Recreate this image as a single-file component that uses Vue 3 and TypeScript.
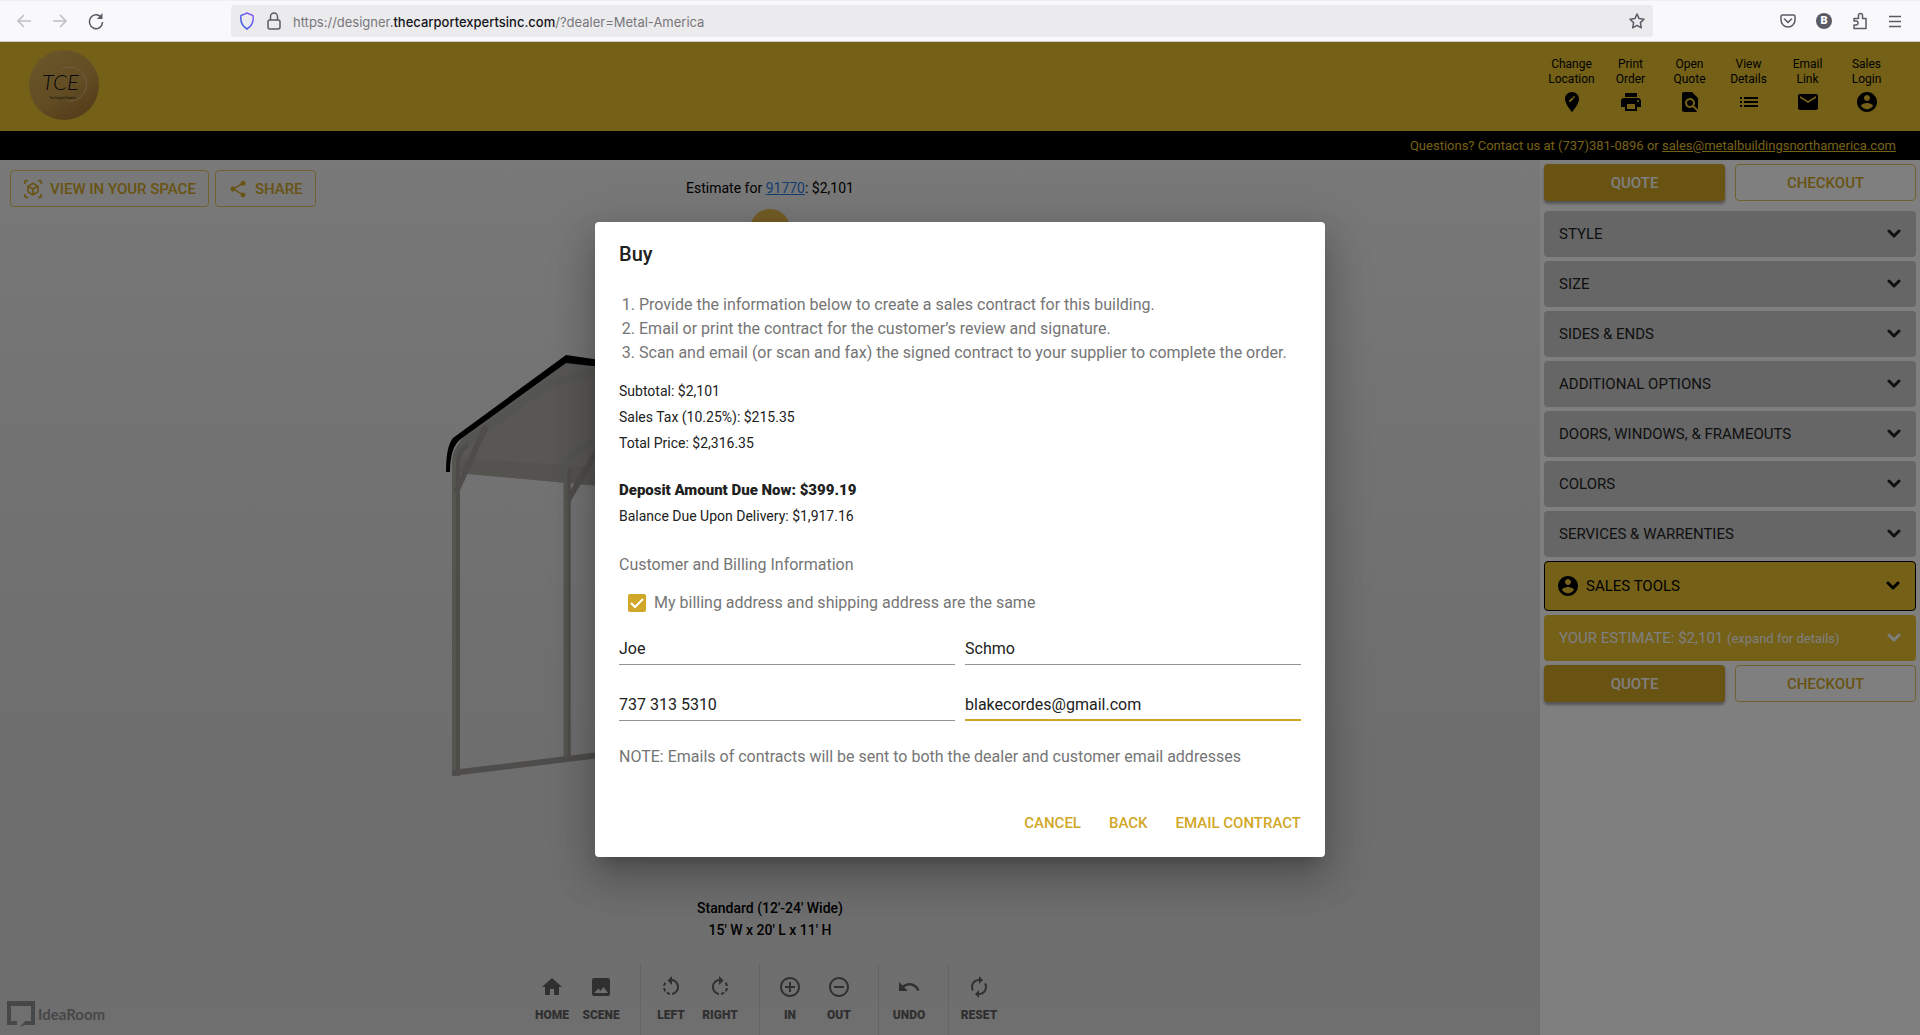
<script setup lang="ts">
import { ref } from 'vue'

interface IconItem {
  label: string
  path: string
}

const icons = {
  account:
    'M12 2C6.48 2 2 6.48 2 12s4.48 10 10 10 10-4.48 10-10S17.52 2 12 2zm0 3c1.66 0 3 1.34 3 3s-1.34 3-3 3-3-1.34-3-3 1.34-3 3-3zm0 14.2c-2.5 0-4.71-1.28-6-3.22.03-1.99 4-3.08 6-3.08 1.99 0 5.97 1.09 6 3.08-1.29 1.94-3.5 3.22-6 3.22z',
  ar: 'M3 4c0-.55.45-1 1-1h2V1H4C2.34 1 1 2.34 1 4v2h2V4zM3 20v-2H1v2c0 1.66 1.34 3 3 3h2v-2H4c-.55 0-1-.45-1-1zM20 1h-2v2h2c.55 0 1 .45 1 1v2h2V4c0-1.66-1.34-3-3-3zM21 20c0 .55-.45 1-1 1h-2v2h2c1.66 0 3-1.34 3-3v-2h-2v2zM19 14.87V9.13c0-.72-.38-1.38-1-1.73l-5-2.88c-.31-.18-.65-.27-1-.27s-.69.09-1 .27L6 7.39c-.62.36-1 1.02-1 1.74v5.74c0 .72.38 1.38 1 1.73l5 2.88c.31.18.65.27 1 .27s.69-.09 1-.27l5-2.88c.62-.35 1-1.01 1-1.73zm-8 2.3l-4-2.3v-4.63l4 2.33v4.6zm1-6.33L8.04 8.53 12 6.25l3.96 2.28L12 10.84zm5 4.03l-4 2.3v-4.6l4-2.33v4.63z',
  share:
    'M18 16.08c-.76 0-1.44.3-1.96.77L8.91 12.7c.05-.23.09-.46.09-.7s-.04-.47-.09-.7l7.05-4.11c.54.5 1.25.81 2.04.81 1.66 0 3-1.34 3-3s-1.34-3-3-3-3 1.34-3 3c0 .24.04.47.09.7L8.04 9.81C7.5 9.31 6.79 9 6 9c-1.66 0-3 1.34-3 3s1.34 3 3 3c.79 0 1.5-.31 2.04-.81l7.12 4.16c-.05.21-.08.43-.08.65 0 1.61 1.31 2.92 2.92 2.92s2.92-1.31 2.92-2.92-1.31-2.92-2.92-2.92z',
}

const menu: IconItem[] = [
  {
    label: 'Change Location',
    path: 'M12 2C8.14 2 5 5.14 5 9c0 5.25 7 13 7 13s7-7.75 7-13c0-3.86-3.14-7-7-7zm-1.56 10H9v-1.44l3.35-3.34 1.43 1.43L10.44 12zm4.45-4.45l-.7.7-1.44-1.44.7-.7c.15-.15.39-.15.54 0l.9.9c.15.15.15.39 0 .54z',
  },
  {
    label: 'Print Order',
    path: 'M19 8H5c-1.66 0-3 1.34-3 3v6h4v4h12v-4h4v-6c0-1.66-1.34-3-3-3zm-3 11H8v-5h8v5zm3-7c-.55 0-1-.45-1-1s.45-1 1-1 1 .45 1 1-.45 1-1 1zm-1-9H6v4h12V3z',
  },
  {
    label: 'Open Quote',
    path: 'M20 19.59V8l-6-6H6c-1.1 0-1.99.9-1.99 2L4 20c0 1.1.89 2 1.99 2H18c.45 0 .85-.15 1.19-.4l-4.43-4.43c-.8.52-1.74.83-2.76.83-2.76 0-5-2.24-5-5s2.24-5 5-5 5 2.24 5 5c0 1.02-.31 1.96-.83 2.75L20 19.59zM9 13c0 1.66 1.34 3 3 3s3-1.34 3-3-1.34-3-3-3-3 1.34-3 3z',
  },
  {
    label: 'View Details',
    path: 'M3 13h2v-2H3v2zm0 4h2v-2H3v2zm0-8h2V7H3v2zm4 4h14v-2H7v2zm0 4h14v-2H7v2zM7 7v2h14V7H7z',
  },
  {
    label: 'Email Link',
    path: 'M20 4H4c-1.1 0-1.99.9-1.99 2L2 18c0 1.1.9 2 2 2h16c1.1 0 2-.9 2-2V6c0-1.1-.9-2-2-2zm0 4l-8 5-8-5V6l8 5 8-5v2z',
  },
  { label: 'Sales Login', path: icons.account },
]

const toolGroups: IconItem[][] = [
  [
    { label: 'Home', path: 'M10 20v-6h4v6h5v-8h3L12 3 2 12h3v8z' },
    {
      label: 'Scene',
      path: 'M5 3h14a2 2 0 0 1 2 2v14a2 2 0 0 1-2 2H5a2 2 0 0 1-2-2V5a2 2 0 0 1 2-2zm0 15h14l-4.500-6-3 4-2-2.500z',
    },
  ],
  [
    {
      label: 'Left',
      path: 'M7.11 8.53L5.7 7.11C4.8 8.27 4.24 9.61 4.07 11h2.02c.14-.87.49-1.72 1.02-2.47zM6.09 13H4.07c.17 1.39.72 2.73 1.62 3.89l1.41-1.42c-.52-.75-.87-1.59-1.01-2.47zm1.01 5.32c1.16.9 2.51 1.44 3.9 1.61V17.9c-.87-.15-1.71-.49-2.46-1.03L7.1 18.32zM13 4.07V1L8.45 5.55 13 10V6.09c2.84.48 5 2.94 5 5.91s-2.16 5.43-5 5.91v2.02c3.95-.49 7-3.85 7-7.93s-3.05-7.44-7-7.93z',
    },
    {
      label: 'Right',
      path: 'M15.55 5.55L11 1v3.07C7.06 4.56 4 7.92 4 12s3.05 7.44 7 7.93v-2.02c-2.84-.48-5-2.94-5-5.91s2.16-5.43 5-5.91V10l4.55-4.45zM19.93 11c-.17-1.39-.72-2.73-1.62-3.89l-1.42 1.42c.54.75.88 1.6 1.02 2.47h2.02zM13 17.9v2.02c1.39-.17 2.74-.71 3.9-1.61l-1.44-1.44c-.75.54-1.59.89-2.46 1.03zm3.89-2.42l1.42 1.41c.9-1.16 1.45-2.5 1.62-3.89h-2.02c-.14.87-.48 1.72-1.02 2.48z',
    },
  ],
  [
    {
      label: 'In',
      path: 'M13 7h-2v4H7v2h4v4h2v-4h4v-2h-4V7zm-1-5C6.48 2 2 6.48 2 12s4.48 10 10 10 10-4.48 10-10S17.52 2 12 2zm0 18c-4.41 0-8-3.59-8-8s3.59-8 8-8 8 3.59 8 8-3.59 8-8 8z',
    },
    {
      label: 'Out',
      path: 'M7 11v2h10v-2H7zm5-9C6.48 2 2 6.48 2 12s4.48 10 10 10 10-4.48 10-10S17.52 2 12 2zm0 18c-4.41 0-8-3.59-8-8s3.59-8 8-8 8 3.59 8 8-3.59 8-8 8z',
    },
  ],
  [
    {
      label: 'Undo',
      path: 'M12.5 8c-2.65 0-5.05.99-6.9 2.6L2 7v9h9l-3.62-3.62c1.39-1.16 3.16-1.88 5.12-1.88 3.54 0 6.55 2.31 7.6 5.5l2.37-.78C21.08 11.03 17.15 8 12.5 8z',
    },
  ],
  [
    {
      label: 'Reset',
      path: 'M12 6v3l4-4-4-4v3c-4.42 0-8 3.58-8 8 0 1.57.46 3.03 1.24 4.26L6.7 14.8c-.45-.83-.7-1.79-.7-2.8 0-3.31 2.69-6 6-6zm6.76 1.74L17.3 9.2c.44.84.7 1.79.7 2.8 0 3.31-2.69 6-6 6v-3l-4 4 4 4v-3c4.42 0 8-3.58 8-8 0-1.57-.46-3.03-1.24-4.26z',
    },
  ],
]

const sections: string[] = [
  'Style',
  'Size',
  'Sides & Ends',
  'Additional Options',
  'Doors, Windows, & Frameouts',
  'Colors',
  'Services & Warrenties',
]

const sameAddress = ref(true)
const firstName = ref('Joe')
const lastName = ref('Schmo')
const phone = ref('737 313 5310')
const email = ref('blakecordes@gmail.com')
</script>

<template>
  <div class="page">
    <div class="browser">
      <div class="browser-nav">
        <button class="plain faded" type="button" aria-label="Back">
          <svg width="16" height="16" viewBox="0 0 16 16"><path d="M15 8H2M8 2L2 8l6 6" /></svg>
        </button>
        <button class="plain faded" type="button" aria-label="Forward">
          <svg width="16" height="16" viewBox="0 0 16 16"><path d="M1 8h13M8 2l6 6-6 6" /></svg>
        </button>
        <button class="plain" type="button" aria-label="Reload">
          <svg width="16" height="18" viewBox="0 0 16 18">
            <path d="M13.500 6A6.500 7 0 1 0 14.500 10" />
            <path d="M14.500 1v6H9z" fill="#5b5b66" stroke="none" />
          </svg>
        </button>
      </div>
      <div class="url">
        <svg width="16" height="18" viewBox="0 0 16 18">
          <defs>
            <linearGradient id="shield" x1="0" y1="1" x2="1" y2="0">
              <stop offset="0" stop-color="#2b5fe0" />
              <stop offset="1" stop-color="#8f5cf5" />
            </linearGradient>
          </defs>
          <path d="M8 1l6 2.500c.8 5-.5 10-6 13.500C2.500 13.500 1.200 8.500 2 3.500z" style="stroke: url(#shield)" />
        </svg>
        <svg width="14" height="18" viewBox="0 0 14 18">
          <rect x="1" y="8" width="12" height="9" rx="2" />
          <path d="M3.500 8V4.500a3.500 3.500 0 0 1 7 0V8" />
        </svg>
        <span class="address">https://designer.<b>thecarportexpertsinc.com</b>/?dealer=Metal-America</span>
        <svg width="16" height="16" viewBox="0 0 16 16">
          <path d="M8 1l2.100 4.600 4.900.6-3.600 3.400.9 5.200L8 12.300l-4.300 2.500.9-5.200L1 6.200l4.900-.6z" stroke-linejoin="round" />
        </svg>
      </div>
      <div class="browser-tools">
        <svg width="16" height="16" viewBox="0 0 16 16">
          <path d="M2.500 2h11A1.500 1.500 0 0 1 15 3.500V7A7 7 0 0 1 1 7V3.500A1.500 1.500 0 0 1 2.500 2zM4.500 6L8 9.500 11.500 6" stroke-linecap="round" />
        </svg>
        <span class="avatar">B</span>
        <svg width="16" height="18" viewBox="0 0 16 18">
          <path d="M2 16.500v-3.500h2a2 2 0 0 0 0-4H2V6.500h4.500V3.500a2 2 0 0 1 4 0v3h3.500v10z" stroke-linejoin="round" />
        </svg>
        <svg width="14" height="14" viewBox="0 0 14 14"><path d="M1 2.500h12M1 7.500h12M1 12.500h12" /></svg>
      </div>
    </div>

    <div class="site">
      <header class="banner">
        <svg class="logo" width="70" height="70" viewBox="0 0 70 70" role="img" aria-label="TCE">
          <defs>
            <linearGradient id="coin" x1="0.2" y1="0" x2="0.8" y2="1">
              <stop offset="0" stop-color="#d6ad55" />
              <stop offset="0.55" stop-color="#c49a48" />
              <stop offset="1" stop-color="#a5752f" />
            </linearGradient>
          </defs>
          <circle cx="35" cy="35" r="35" fill="url(#coin)" />
          <path d="M33 19a17 17 0 1 1 5 32" fill="none" stroke="#d9bd83" />
          <text class="monogram" x="13" y="40">TCE</text>
          <text x="20" y="49" font-size="3" fill="#222">The Carport Experts</text>
        </svg>
        <nav class="menu">
          <button v-for="item in menu" :key="item.label" class="menu-item" type="button">
            <span>{{ item.label }}</span>
            <svg width="24" height="24" viewBox="0 0 24 24"><path :d="item.path" /></svg>
          </button>
        </nav>
      </header>

      <div class="contact">
        Questions? Contact us at (737)381-0896 or
        <a href="mailto:sales@metalbuildingsnorthamerica.com">sales@metalbuildingsnorthamerica.com</a>
      </div>

      <div class="body">
        <main class="viewer">
          <svg class="carport" width="160" height="460" viewBox="440 340 160 460" aria-hidden="true">
            <path d="M456 448L466 432 566 362 600 368V486L458 473z" fill="#b2afaa" />
            <path d="M458 458L568 465 600 467V486L458 473z" fill="#a9a6a1" />
            <g fill="none">
              <path d="M456 776V462q0-14 14-22L548 384 600 370" stroke="#a9a8a3" stroke-width="8" />
              <path d="M458 770V462q0-11 10-17" stroke="#9a9892" stroke-width="4" />
              <path d="M567 757V468q0-12 10-17l25-14" stroke="#a9a8a3" stroke-width="7" />
              <path d="M569 757V468" stroke="#9a9892" stroke-width="3" />
              <path d="M456 492L486 426M568 500l32-54" stroke="#9d9b96" stroke-width="6" />
              <path d="M452 773L600 755" stroke="#9d9b96" stroke-width="6" />
            </g>
            <path d="M446 472Q446 446 453 438L566 355 600 360V367L566 363 462 438Q450 446 450 472z" fill="#000" />
          </svg>
          <svg class="compass" width="40" height="40" viewBox="0 0 40 40" aria-hidden="true">
            <circle cx="20" cy="20" r="20" fill="#e6b84a" />
          </svg>

          <div class="viewer-top">
            <div class="actions">
              <button class="outlined" type="button">
                <svg width="20" height="20" viewBox="0 0 24 24"><path :d="icons.ar" /></svg>View in your space
              </button>
              <button class="outlined" type="button">
                <svg width="20" height="20" viewBox="0 0 24 24"><path :d="icons.share" /></svg>Share
              </button>
            </div>
            <p class="estimate">Estimate for <a href="#zip">91770</a>: $2,101</p>
          </div>

          <div class="viewer-bottom">
            <p class="dimensions">Standard (12'-24' Wide)<br />15' W x 20' L x 11' H</p>
            <div class="toolbar">
              <div v-for="(group, index) in toolGroups" :key="index" class="tool-group">
                <button v-for="tool in group" :key="tool.label" class="tool" type="button">
                  <svg width="24" height="24" viewBox="0 0 24 24"><path :d="tool.path" fill-rule="evenodd" /></svg>
                  {{ tool.label }}
                </button>
              </div>
            </div>
          </div>

          <a class="brand" href="#idearoom">
            <svg width="28" height="26" viewBox="0 0 28 26">
              <path d="M0 0h28v24H18l-5 2 5-6h6V5H4v15h6v4H0z" />
            </svg>
            IdeaRoom
          </a>
        </main>

        <aside class="sidebar">
          <div class="pair">
            <button class="contained" type="button">Quote</button>
            <button class="outlined" type="button">Checkout</button>
          </div>
          <button v-for="section in sections" :key="section" class="section" type="button">
            <span class="caps">{{ section }}</span>
            <svg class="chevron" width="14" height="10" viewBox="0 0 14 10"><path d="M2 2l5 5 5-5" /></svg>
          </button>
          <button class="section sales" type="button">
            <svg width="24" height="24" viewBox="0 0 24 24"><path :d="icons.account" /></svg>
            <span class="caps">Sales Tools</span>
            <svg class="chevron" width="14" height="10" viewBox="0 0 14 10"><path d="M2 2l5 5 5-5" /></svg>
          </button>
          <button class="section total" type="button">
            <span>YOUR ESTIMATE: $2,101 <small>(expand for details)</small></span>
            <svg class="chevron" width="14" height="10" viewBox="0 0 14 10"><path d="M2 2l5 5 5-5" /></svg>
          </button>
          <div class="pair">
            <button class="contained" type="button">Quote</button>
            <button class="outlined" type="button">Checkout</button>
          </div>
        </aside>
      </div>

      <div class="backdrop">
        <form class="dialog" role="dialog" aria-labelledby="dialog-title" @submit.prevent>
          <h2 id="dialog-title">Buy</h2>
          <ol>
            <li>Provide the information below to create a sales contract for this building.</li>
            <li>Email or print the contract for the customer’s review and signature.</li>
            <li>Scan and email (or scan and fax) the signed contract to your supplier to complete the order.</li>
          </ol>
          <div class="prices">
            <p>Subtotal: $2,101</p>
            <p>Sales Tax (10.25%): $215.35</p>
            <p>Total Price: $2,316.35</p>
          </div>
          <div class="prices due">
            <p><strong>Deposit Amount Due Now: $399.19</strong></p>
            <p>Balance Due Upon Delivery: $1,917.16</p>
          </div>
          <h3>Customer and Billing Information</h3>
          <label class="same">
            <span class="tick">
              <input v-model="sameAddress" type="checkbox" />
              <svg v-if="sameAddress" width="18" height="18" viewBox="0 0 18 18"><path d="M3 9l4 4 8-8" /></svg>
            </span>
            My billing address and shipping address are the same
          </label>
          <div class="fields">
            <input v-model="firstName" type="text" aria-label="First name" />
            <input v-model="lastName" type="text" aria-label="Last name" />
            <input v-model="phone" type="tel" aria-label="Phone" />
            <input v-model="email" class="active" type="email" aria-label="Email" />
          </div>
          <p class="note">NOTE: Emails of contracts will be sent to both the dealer and customer email addresses</p>
          <div class="dialog-actions">
            <button type="button">Cancel</button>
            <button type="button">Back</button>
            <button type="submit">Email contract</button>
          </div>
        </form>
      </div>
    </div>
  </div>
</template>

<style>
body {
  background: #fff;
}
</style>

<style scoped>
* {
  box-sizing: border-box;
}

p,
h2,
h3,
ol {
  margin: 0;
}

.page {
  display: flex;
  flex-direction: column;
  min-height: 100vh;
  font-family: Roboto, sans-serif;
  font-size: 14px;
  color: #000;
}

button {
  margin: 0;
  border: 0;
  background: none;
  font-family: inherit;
  cursor: pointer;
}

/* Browser chrome */
.browser {
  display: flex;
  align-items: center;
  height: 42px;
  border-top: 1px solid #f0f0f4;
  border-bottom: 1px solid #ccccd0;
  background: #f9f9fb;
}

.browser svg {
  flex: none;
  fill: none;
  stroke: #5b5b66;
  stroke-width: 1.5;
}

.browser-nav {
  display: flex;
  gap: 20px;
  width: 231px;
  padding-left: 16px;
}

.plain {
  display: flex;
  align-items: center;
  padding: 0;
}

.browser .faded svg {
  stroke: #bdbdc3;
}

.url {
  display: flex;
  flex: 1;
  align-items: center;
  gap: 12px;
  height: 32px;
  padding: 0 8px;
  border-radius: 4px;
  background: #ebebed;
}

.address {
  flex: 1;
  padding-top: 2px;
  font-family: Inter, sans-serif;
  font-size: 13px;
  color: #77777b;
}

.address b {
  font-weight: 500;
  color: #15141a;
}

.browser-tools {
  display: flex;
  align-items: center;
  gap: 20px;
  width: 267px;
  padding-left: 127px;
}

.avatar {
  width: 16px;
  height: 16px;
  border-radius: 8px;
  background: #5b5b66;
  color: #fff;
  font-size: 11px;
  font-weight: 900;
  line-height: 16px;
  text-align: center;
}

/* Site */
.site {
  position: relative;
  display: flex;
  flex: 1;
  flex-direction: column;
}

.banner {
  display: flex;
  align-items: flex-start;
  justify-content: space-between;
  height: 89px;
  padding: 8px 24px 0 29px;
  background: #e8c02e;
}

.monogram {
  fill: #111;
  font-family: Lato, sans-serif;
  font-size: 22px;
  font-style: italic;
  font-weight: 300;
}

.menu {
  display: flex;
  padding-top: 7px;
}

.menu-item {
  display: flex;
  flex-direction: column;
  align-items: center;
  gap: 3px;
  width: 59px;
  padding: 0 4px;
  font-size: 12px;
  line-height: 15px;
}

.contact {
  height: 29px;
  padding-right: 24px;
  background: #000;
  color: #e8c02e;
  font-size: 13px;
  line-height: 29px;
  text-align: right;
}

.contact a {
  color: inherit;
}

.body {
  display: flex;
  flex: 1;
}

.viewer {
  position: relative;
  display: flex;
  flex: 1;
  flex-direction: column;
  justify-content: space-between;
  background: linear-gradient(#f2f2f2, #e6e6e6 30%, #dcdcdc 70%, #dedede);
}

.carport {
  position: absolute;
  top: 180px;
  left: calc(50% - 330px);
}

.compass {
  position: absolute;
  top: 49px;
  left: calc(50% - 20px);
}

.viewer-top {
  position: relative;
}

.actions {
  display: flex;
  gap: 6px;
  padding: 10px;
}

.outlined,
.contained {
  display: flex;
  align-items: center;
  justify-content: center;
  height: 37px;
  padding: 0 12px;
  border: 1px solid #e3c35f;
  border-radius: 4px;
  background: #fff;
  color: #d1a727;
  font-size: 15px;
  font-weight: 500;
  text-transform: uppercase;
}

.contained {
  border: 0;
  background: #d1a727;
  color: #fff;
  box-shadow: 0 3px 2px rgba(0, 0, 0, 0.2), 0 2px 4px rgba(0, 0, 0, 0.2);
}

.actions .outlined {
  gap: 7px;
  background: transparent;
}

.outlined svg {
  fill: currentColor;
}

.estimate {
  position: absolute;
  top: 16px;
  right: 0;
  left: 0;
  line-height: 24px;
  text-align: center;
  pointer-events: none;
}

.estimate a {
  color: #2b7de0;
  pointer-events: auto;
}

.viewer-bottom {
  display: flex;
  flex-direction: column;
  align-items: center;
  gap: 23px;
}

.dimensions {
  font-weight: 500;
  line-height: 22px;
  text-align: center;
}

.toolbar {
  display: flex;
}

.tool-group {
  display: flex;
  height: 71px;
  padding: 11px 14px 0 0;
}

.tool-group + .tool-group {
  padding-left: 6px;
  border-left: 1px solid #c9c9c9;
}

.tool-group:last-child {
  padding-right: 9px;
}

.tool {
  display: flex;
  flex-direction: column;
  align-items: center;
  gap: 8px;
  width: 49px;
  height: 50px;
  padding: 0;
  color: #616161;
  font-size: 12px;
  font-weight: 900;
  line-height: 16px;
  text-transform: uppercase;
}

.tool svg {
  fill: currentColor;
}

.brand {
  position: absolute;
  bottom: 8px;
  left: 7px;
  display: flex;
  align-items: center;
  gap: 3px;
  color: #8c8f91;
  font-family: Lato, sans-serif;
  font-size: 15px;
  font-weight: 700;
  text-decoration: none;
}

.brand svg {
  fill: #8c8f91;
}

/* Sidebar */
.sidebar {
  display: flex;
  flex: none;
  flex-direction: column;
  gap: 4px;
  width: 380px;
  padding: 4px;
  background: #fff;
}

.pair {
  display: grid;
  grid-template-columns: 1fr 1fr;
  gap: 10px;
}

.pair:first-child {
  margin-bottom: 6px;
}

.section {
  display: flex;
  align-items: center;
  justify-content: space-between;
  height: 46px;
  padding: 0 15px;
  border-radius: 4px;
  background: #ccc;
  color: #222;
  font-size: 15px;
  text-align: left;
}

.caps {
  text-transform: uppercase;
}

.chevron {
  fill: none;
  stroke: currentColor;
  stroke-width: 3;
  stroke-linecap: round;
  stroke-linejoin: round;
}

.sales {
  justify-content: flex-start;
  gap: 6px;
  height: 50px;
  padding: 0 15px 0 11px;
  border: 1px solid #000;
  background: #e8c02e;
  color: #000;
}

.sales .caps {
  flex: 1;
}

.total {
  background: #e8c02e;
  color: #fff;
}

.total small {
  font-size: 13px;
}

/* Dialog */
.backdrop {
  position: absolute;
  inset: 0;
  display: flex;
  align-items: center;
  justify-content: center;
  padding-top: 2px;
  background: rgba(0, 0, 0, 0.5);
}

.dialog {
  width: 100%;
  max-width: 730px;
  padding: 16px 24px;
  border-radius: 4px;
  background: #fff;
  box-shadow: 0 11px 15px -7px rgba(0, 0, 0, 0.2), 0 24px 38px 3px rgba(0, 0, 0, 0.14),
    0 9px 46px 8px rgba(0, 0, 0, 0.12);
  color: #757575;
  font-size: 16px;
  line-height: 24px;
}

.dialog h2 {
  color: #212121;
  font-size: 20px;
  font-weight: 500;
  line-height: 32px;
}

.dialog h3 {
  margin-top: 24px;
  font-size: 16px;
  font-weight: 400;
}

.dialog ol {
  margin-top: 23px;
  padding-left: 20px;
}

.prices {
  margin-top: 13px;
  color: #212121;
  font-size: 14px;
  line-height: 26px;
}

.prices strong {
  font-size: 15px;
  font-weight: 900;
}

.due {
  margin-top: 21px;
}

.same {
  display: flex;
  align-items: center;
  gap: 8px;
  margin-top: 14px;
  padding-left: 9px;
}

.tick {
  position: relative;
  width: 18px;
  height: 18px;
}

.tick input {
  display: block;
  width: 18px;
  height: 18px;
  margin: 0;
  border: 2px solid #d1a727;
  border-radius: 2px;
  appearance: none;
}

.tick input:checked {
  background: #d1a727;
}

.tick svg {
  position: absolute;
  inset: 0;
  fill: none;
  stroke: #fff;
  stroke-width: 2;
  pointer-events: none;
}

.fields {
  display: grid;
  grid-template-columns: 1fr 1fr;
  gap: 24px 10px;
  margin-top: 18px;
}

.fields input {
  width: 100%;
  height: 32px;
  padding: 0;
  border: 0;
  border-bottom: 1px solid #949494;
  border-radius: 0;
  outline: 0;
  background: none;
  color: #212121;
  font-family: inherit;
  font-size: 16px;
}

.fields .active {
  border-bottom: 2px solid #d1a727;
}

.note {
  margin-top: 24px;
}

.dialog-actions {
  display: flex;
  justify-content: flex-end;
  margin: 36px -14px 0 0;
}

.dialog-actions button {
  height: 36px;
  padding: 0 14px;
  color: #d1a727;
  font-size: 15px;
  font-weight: 500;
  text-transform: uppercase;
}
</style>
